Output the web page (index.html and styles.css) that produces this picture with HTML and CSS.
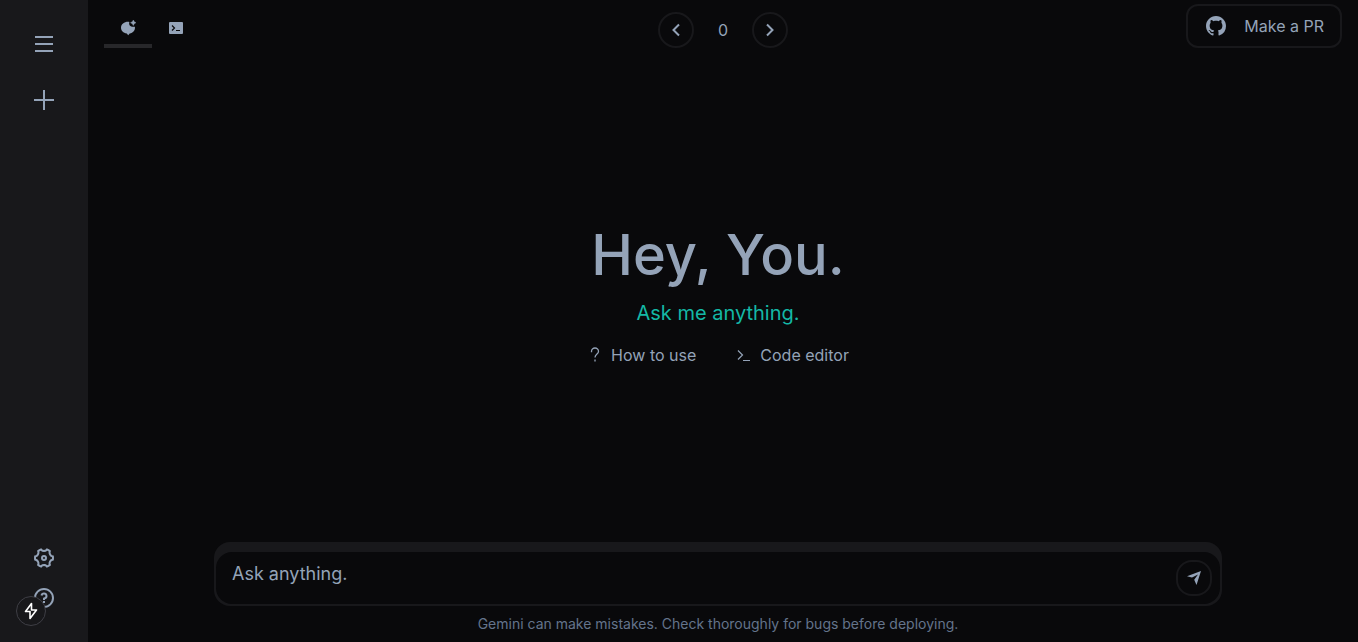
FILE: index.html
```html
<!DOCTYPE html>
<html lang="en">
<head>
<meta charset="utf-8">
<meta name="viewport" content="width=device-width, initial-scale=1">
<title>Chat</title>
<link rel="stylesheet" href="styles.css">
</head>
<body>
<div class="app">
  <aside class="sidebar">
    <div class="side-group side-top">
      <button class="side-btn" type="button" aria-label="Menu">
        <svg width="24" height="24" viewBox="0 0 24 24" fill="currentColor"><path d="M3 4h18v2H3zM3 11h18v2H3zM3 18h18v2H3z"/></svg>
      </button>
      <button class="side-btn" type="button" aria-label="New chat">
        <svg width="24" height="24" viewBox="0 0 24 24" fill="currentColor"><path d="M11 2h2v9h9v2h-9v9h-2v-9H2v-2h9z"/></svg>
      </button>
    </div>
    <div class="side-group side-bottom">
      <button class="side-btn" type="button" aria-label="Settings">
        <svg width="24" height="24" viewBox="0 0 24 24" fill="currentColor"><path d="M2 12c0-.865.11-1.703.316-2.504A3 3 0 0 0 4.990 4.867a9.990 9.990 0 0 1 4.335-2.505 3 3 0 0 0 5.348 0 9.990 9.990 0 0 1 4.335 2.505 3 3 0 0 0 2.675 4.630c.206.8.316 1.638.316 2.503 0 .864-.11 1.703-.316 2.503a3 3 0 0 0-2.675 4.630 9.990 9.990 0 0 1-4.335 2.505 3 3 0 0 0-5.348 0 9.990 9.990 0 0 1-4.335-2.505 3 3 0 0 0-2.675-4.630A10.056 10.056 0 0 1 2 12zm4.804 3c.63 1.091.81 2.346.564 3.524.408.29.842.541 1.297.75A4.993 4.993 0 0 1 12 18c1.260 0 2.438.471 3.335 1.274.455-.209.889-.46 1.297-.75A4.993 4.993 0 0 1 17.196 15a4.993 4.993 0 0 1 2.770-2.250 8.126 8.126 0 0 0 0-1.500A4.993 4.993 0 0 1 17.195 9a4.993 4.993 0 0 1-.564-3.524 7.989 7.989 0 0 0-1.297-.75A4.993 4.993 0 0 1 12 6a4.993 4.993 0 0 1-3.335-1.274 7.990 7.990 0 0 0-1.297.75A4.993 4.993 0 0 1 6.804 9a4.993 4.993 0 0 1-2.770 2.250 8.126 8.126 0 0 0 0 1.500A4.993 4.993 0 0 1 6.805 15zM12 15a3 3 0 1 1 0-6 3 3 0 0 1 0 6zm0-2a1 1 0 1 0 0-2 1 1 0 0 0 0 2z"/></svg>
      </button>
      <button class="side-btn" type="button" aria-label="Help">
        <svg width="24" height="24" viewBox="0 0 24 24" fill="currentColor"><path d="M12 22C6.477 22 2 17.523 2 12S6.477 2 12 2s10 4.477 10 10-4.477 10-10 10zm0-2a8 8 0 1 0 0-16 8 8 0 0 0 0 16zm-1-5h2v2h-2v-2zm2-1.645V14h-2v-1.500a1 1 0 0 1 1-1 1.500 1.500 0 1 0-1.471-1.794l-1.962-.393A3.500 3.500 0 1 1 13 13.355z"/></svg>
      </button>
    </div>
  </aside>
  <main class="main">
    <header class="topbar">
      <nav class="tabs">
        <button class="tab tab-active" type="button" aria-label="Chat">
          <svg width="16" height="16" viewBox="0 0 16 16" fill="currentColor"><path d="M9.400 1.900C8.400 4.800 10.400 7.400 14.900 6.700C15.500 10.300 13 13 9.700 13.400L8.200 15.200L6.800 13.500C3.300 13.100 1 10.800 1 7.800C1 3.800 5 1.200 9.400 1.900Z"/><path d="M13.300 0L14.300 1.700L16 2.700L14.300 3.700L13.300 5.500L12.300 3.700L10.500 2.700L12.300 1.700Z" stroke="currentColor" stroke-width="0.400"/></svg>
        </button>
        <button class="tab" type="button" aria-label="Terminal">
          <svg width="16" height="16" viewBox="0 0 16 16"><rect x="1" y="2" width="14" height="12" rx="1" fill="currentColor"/><path d="M4 5.500L6.500 8L4 10.500M8 10.500h4" fill="none" stroke="#09090b" stroke-width="1.200"/></svg>
        </button>
      </nav>
      <div class="pager">
        <button class="round-btn" type="button" aria-label="Previous">
          <svg width="20" height="20" viewBox="0 0 20 20" fill="none" stroke="currentColor" stroke-width="2"><path d="M13 4.500L7.500 10L13 15.500"/></svg>
        </button>
        <span class="count">0</span>
        <button class="round-btn" type="button" aria-label="Next">
          <svg width="20" height="20" viewBox="0 0 20 20" fill="none" stroke="currentColor" stroke-width="2"><path d="M7 4.500L12.500 10L7 15.500"/></svg>
        </button>
      </div>
      <a class="pr-btn" href="#pr">
        <svg width="20" height="20" viewBox="0 0 16 16" fill="currentColor"><path d="M8 0C3.580 0 0 3.580 0 8c0 3.540 2.290 6.530 5.470 7.590.4.070.55-.17.55-.38 0-.19-.01-.82-.01-1.490-2.010.37-2.530-.49-2.690-.94-.09-.23-.48-.94-.82-1.130-.28-.15-.68-.52-.01-.53.63-.01 1.080.58 1.230.82.72 1.210 1.870.87 2.330.66.07-.52.28-.87.51-1.070-1.780-.2-3.640-.89-3.640-3.950 0-.87.31-1.590.82-2.150-.08-.2-.36-1.020.08-2.120 0 0 .67-.21 2.200.82.640-.18 1.320-.27 2-.27s1.360.09 2 .27c1.530-1.040 2.200-.82 2.200-.82.440 1.100.16 1.920.08 2.120.51.56.82 1.270.82 2.150 0 3.070-1.870 3.750-3.650 3.950.29.25.54.73.54 1.480 0 1.070-.01 1.930-.01 2.200 0 .21.15.46.55.38A8.010 8.010 0 0 0 16 8c0-4.420-3.580-8-8-8z"/></svg>
        <span>Make a PR</span>
      </a>
    </header>
    <section class="hero">
      <h1 class="title">Hey, You.</h1>
      <p class="subtitle">Ask me anything.</p>
      <div class="links">
        <a class="link" href="#how">
          <svg width="16" height="16" viewBox="0 0 16 16" fill="none" stroke="currentColor" stroke-width="1.300"><path d="M4.500 5.200V4.500A3.500 3.500 0 0 1 11.500 4.500C11.500 7 8 7 8 10.500M8 12.600v2"/></svg>
          <span>How to use</span>
        </a>
        <a class="link" href="#editor">
          <svg width="16" height="16" viewBox="0 0 16 16" fill="none" stroke="currentColor" stroke-width="1.200"><path d="M2 3.500L6.500 8L2 12.500M7 13.500h7"/></svg>
          <span>Code editor</span>
        </a>
      </div>
    </section>
    <footer class="dock">
      <form class="composer">
        <div class="composer-inner">
          <input class="prompt" type="text" placeholder="Ask anything." aria-label="Ask anything.">
          <button class="round-btn send" type="button" aria-label="Send">
            <svg width="16" height="16" viewBox="0 0 16 16" fill="currentColor"><path d="M15 1L10.500 15L8.200 9.800L12 4.500L6 7.600L1 6.200Z"/></svg>
          </button>
        </div>
      </form>
      <p class="note">Gemini can make mistakes. Check thoroughly for bugs before deploying.</p>
    </footer>
  </main>
  <button class="bolt" type="button" aria-label="Quick actions">
    <svg width="18" height="18" viewBox="0 0 18 18" fill="none" stroke="currentColor" stroke-width="1.600" stroke-linejoin="round"><path d="M9.500 1.500L3.500 9.500H8V16.500L14.500 8H9.500Z"/></svg>
  </button>
</div>
</body>
</html>
```
FILE: styles.css
```css
* {
  box-sizing: border-box;
}

body {
  margin: 0;
  background: #09090b;
  color: #94a3b8;
  font-family: Inter, "Liberation Sans", sans-serif;
  font-size: 16px;
  line-height: 24px;
}

button {
  padding: 0;
  border: 0;
  background: none;
  color: inherit;
  font: inherit;
  cursor: pointer;
}

a {
  color: inherit;
  text-decoration: none;
}

h1,
p {
  margin: 0;
}

svg {
  display: block;
  flex: none;
}

.app {
  display: flex;
  min-height: 100vh;
}

.sidebar {
  display: flex;
  flex-direction: column;
  justify-content: space-between;
  align-items: center;
  width: 88px;
  padding: 32px 0;
  background: #18181b;
}

.side-group {
  display: flex;
  flex-direction: column;
}

.side-top {
  gap: 32px;
}

.side-bottom {
  gap: 16px;
}

.main {
  display: flex;
  flex: 1;
  flex-direction: column;
}

.topbar {
  display: grid;
  grid-template-columns: 1fr auto 1fr;
  align-items: end;
  padding: 4px 16px 0;
}

.tabs {
  display: flex;
}

.tab {
  display: flex;
  justify-content: center;
  width: 48px;
  height: 28px;
  border-bottom: 4px solid transparent;
}

.tab-active {
  border-color: #27272a;
}

.pager {
  display: flex;
  align-items: center;
  gap: 24px;
}

.count {
  width: 10px;
  text-align: center;
}

.round-btn {
  display: grid;
  place-items: center;
  width: 36px;
  height: 36px;
  border: 2px solid #18181b;
  border-radius: 50%;
}

.pr-btn {
  display: flex;
  align-items: center;
  justify-self: end;
  gap: 18px;
  height: 44px;
  padding: 0 16px 0 18px;
  border: 2px solid #18181b;
  border-radius: 12px;
}

.hero {
  display: flex;
  flex: 1;
  flex-direction: column;
  align-items: center;
  justify-content: center;
  padding: 0 10px 4px 0;
}

.title {
  font-size: 56px;
  font-weight: 500;
  line-height: 72px;
}

.subtitle {
  margin-top: 8px;
  color: #14b8a6;
  font-size: 20px;
  line-height: 28px;
}

.links {
  display: flex;
  gap: 40px;
  margin-top: 16px;
}

.link {
  display: flex;
  align-items: center;
  gap: 8px;
}

.dock {
  display: flex;
  flex-direction: column;
  align-items: center;
  gap: 8px;
  padding: 0 10px 8px 0;
}

.composer {
  width: 80%;
  padding: 10px 2px 2px;
  border-radius: 16px;
  background: #18181b;
}

.composer-inner {
  display: flex;
  align-items: center;
  padding: 8px 8px 8px 16px;
  border-radius: 16px;
  background: #09090b;
}

.prompt {
  flex: 1;
  min-width: 0;
  padding: 0 0 8px;
  border: 0;
  outline: 0;
  background: none;
  color: inherit;
  font: inherit;
  font-size: 18px;
}

.prompt::placeholder {
  color: #94a3b8;
  opacity: 1;
}

.send {
  border-radius: 16px;
}

.note {
  color: #64748b;
  font-size: 14px;
  line-height: 20px;
}

.bolt {
  position: fixed;
  bottom: 16px;
  left: 16px;
  display: grid;
  place-items: center;
  width: 30px;
  height: 30px;
  border: 1px solid #3f3f46;
  border-radius: 50%;
  background: #18181b;
  color: #fff;
}
```
